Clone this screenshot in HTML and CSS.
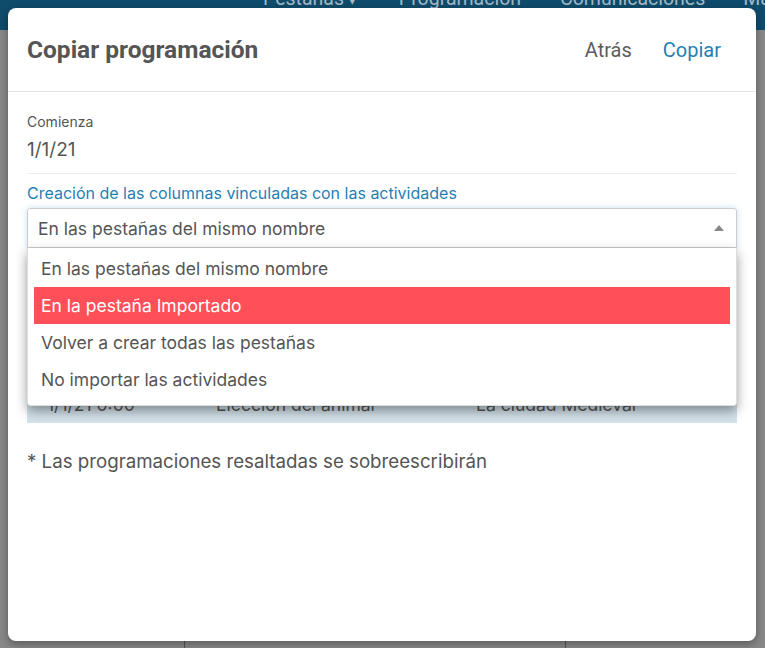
FILE: index.html
```html
<!DOCTYPE html>
<html lang="es">
<head>
    <meta charset="UTF-8">
    <meta name="viewport" content="width=device-width, initial-scale=1.0">
    <title>Copiar programación</title>
    <link rel="stylesheet" href="styles.css">
</head>
<body>
    <!-- Page behind the modal (dimmed) -->
    <div class="navbar">
        <span class="nav-item">Pestañas <span class="caret">▾</span></span>
        <span class="nav-item">Programación</span>
        <span class="nav-item">Comunicaciones</span>
        <span class="nav-item">Ma</span>
    </div>
    <div class="backdrop">
        <div class="bg-col"></div>
        <div class="bg-col"></div>
        <div class="bg-col"></div>
    </div>

    <!-- Modal -->
    <div class="modal">
        <div class="modal-header">
            <h2 class="modal-title">Copiar programación</h2>
            <div class="modal-actions">
                <button class="btn-link">Atrás</button>
                <button class="btn-link primary">Copiar</button>
            </div>
        </div>

        <div class="modal-body">
            <div class="field">
                <div class="field-label">Comienza</div>
                <div class="field-value">1/1/21</div>
            </div>

            <label class="select-label">Creación de las columnas vinculadas con las actividades</label>
            <div class="select-wrap">
                <div class="select-box">
                    <span>En las pestañas del mismo nombre</span>
                    <span class="arrow"></span>
                </div>
                <ul class="select-menu">
                    <li>En las pestañas del mismo nombre</li>
                    <li class="active">En la pestaña Importado</li>
                    <li>Volver a crear todas las pestañas</li>
                    <li>No importar las actividades</li>
                </ul>
            </div>

            <div class="table">
                <div class="table-row">
                    <span class="c1">1/1/21 0:00</span>
                    <span class="c2">Elección del animal</span>
                    <span class="c3">La ciudad Medieval</span>
                </div>
            </div>

            <p class="note">* Las programaciones resaltadas se sobreescribirán</p>
        </div>
    </div>
</body>
</html>
```

FILE: styles.css
```css
body {
    margin: 0;
    height: 648px;
    overflow: hidden;
    background: #878787;
    font-family: Inter, "Noto Sans", sans-serif;
    display: flex;
    flex-direction: column;
}
.navbar {
    height: 30px;
    background: #0f4b6b;
    display: flex;
    overflow: hidden;
    font-family: Roboto, sans-serif;
    font-size: 19.5px;
    color: #a3b8c5;
    line-height: 12px;
}
.nav-item {
    margin-top: -7px;
    white-space: nowrap;
}
.nav-item:nth-child(1) { margin-left: 263px; }
.nav-item:nth-child(2) { margin-left: 43px; }
.nav-item:nth-child(3) { margin-left: 39px; }
.nav-item:nth-child(4) { margin-left: 38px; }
.caret {
    font-size: 13px;
}
.backdrop {
    flex: 1;
    display: flex;
    background: #888;
}
.bg-col {
    width: 184px;
    border-right: 1px solid #555;
}
.bg-col:nth-child(2) {
    width: 380px;
}
.bg-col:nth-child(3) {
    border-right: none;
    flex: 1;
}

.modal {
    position: absolute;
    top: 8px;
    left: 8px;
    width: 748px;
    height: 633px;
    background: #fff;
    border-radius: 8px;
    box-shadow: 0 3px 8px rgba(0, 0, 0, 0.35);
}
.modal-header {
    height: 83px;
    border-bottom: 1px solid #e5e5e5;
    display: flex;
    align-items: center;
    justify-content: space-between;
    padding: 0 19px;
}
.modal-title {
    margin: 0;
    font-family: Roboto, sans-serif;
    font-size: 24.5px;
    font-weight: bold;
    color: #555;
}
.modal-actions {
    display: flex;
    gap: 31px;
    margin-right: 16px;
}
.btn-link {
    border: none;
    background: none;
    padding: 0;
    font-family: Roboto, sans-serif;
    font-size: 20px;
    color: #5c5c5c;
}
.btn-link.primary {
    color: #1f7fb3;
}

.modal-body {
    padding: 0 19px;
}
.field {
    padding-top: 21px;
    padding-bottom: 12px;
    border-bottom: 1px solid #e8eef2;
}
.field-label {
    font-size: 14px;
    color: #555;
    line-height: 18px;
}
.field-value {
    font-size: 19px;
    color: #555;
    margin-top: 8px;
    line-height: 22px;
}
.select-label {
    display: block;
    margin-top: 10px;
    font-size: 16px;
    color: #1f7fb3;
    line-height: 18px;
}
.select-wrap {
    position: relative;
    margin-top: 6px;
}
.select-box {
    height: 38px;
    border: 1px solid #ccc;
    border-radius: 3px 3px 0 0;
    box-shadow: 0 0 6px rgba(90, 170, 230, 0.35);
    display: flex;
    align-items: center;
    justify-content: space-between;
    padding: 0 12px 0 10px;
    font-size: 17.5px;
    color: #555;
}
.arrow {
    width: 0;
    height: 0;
    border-left: 5px solid transparent;
    border-right: 5px solid transparent;
    border-bottom: 6px solid #888;
}
.select-menu {
    position: absolute;
    top: 40px;
    left: 0;
    right: 0;
    margin: 0;
    padding: 2px 6px 7px;
    list-style: none;
    background: #fff;
    border: 1px solid #ddd;
    border-top: none;
    border-radius: 0 0 4px 4px;
    box-shadow: 0 5px 12px rgba(0, 0, 0, 0.4);
    z-index: 2;
}
.select-menu li {
    height: 37px;
    line-height: 37px;
    padding-left: 7px;
    font-size: 17.5px;
    color: #555;
}
.select-menu li.active {
    background: #ff505a;
    color: #fff;
}

.table {
    margin-top: 138px;
}
.table-row {
    height: 37px;
    background: #d4e2eb;
    display: flex;
    align-items: center;
    font-size: 17.5px;
    color: #555;
}
.c1 { margin-left: 20px; width: 169px; }
.c2 { width: 260px; }

.note {
    margin: 28px 0 0;
    font-size: 18.7px;
    line-height: 22px;
    color: #555;
}
```
